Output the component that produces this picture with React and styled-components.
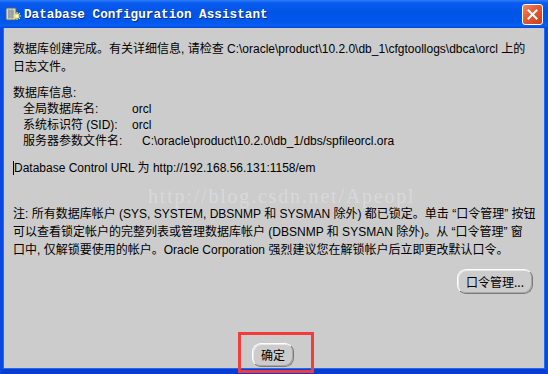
import React from 'react';
import styled, { createGlobalStyle } from 'styled-components';

const GlobalStyle = createGlobalStyle`
  html, body {
    margin: 0;
    padding: 0;
    background: #cccccc;
  }
`;

const latin = `"Liberation Sans", "Noto Sans CJK SC", sans-serif`;
const cjk = `"Noto Sans CJK SC", sans-serif`;

const Window = styled.div`
  position: relative;
  width: 548px;
  height: 374px;
  display: flex;
  flex-direction: column;
  overflow: hidden;
  font-family: ${latin};
  font-size: 12px;
  color: #000;
`;

const TitleBar = styled.div`
  height: 28px;
  flex: none;
  display: flex;
  align-items: center;
  padding: 0 5px 0 5px;
  box-sizing: border-box;
  background: linear-gradient(
    to bottom,
    #2e7ff5 0%,
    #0a5cf0 10%,
    #0054e6 40%,
    #0058ec 80%,
    #0a5ff2 92%,
    #0046d8 100%
  );
`;

const AppIcon = styled.svg`
  width: 16px;
  height: 16px;
  flex: none;
  margin-right: 3px;
`;

const Title = styled.div`
  flex: 1;
  font-family: "Liberation Mono", "DejaVu Sans Mono", monospace;
  font-weight: bold;
  font-size: 12.7px;
  color: #fff;
  text-shadow: 1px 1px 0 #0b2a8c;
  white-space: nowrap;
`;

const CloseButton = styled.div`
  width: 21px;
  height: 21px;
  box-sizing: border-box;
  border: 1px solid #fff;
  border-radius: 3px;
  background: linear-gradient(135deg, #ef8a63 0%, #e15a31 45%, #c8401c 100%);
  display: flex;
  align-items: center;
  justify-content: center;
  margin-top: 1px;
`;

const Body = styled.div`
  flex: 1;
  display: flex;
  flex-direction: column;
  background: #cccccc;
  border-left: 3px solid #0a48e2;
  border-right: 3px solid #0a48e2;
  border-bottom: 5px solid #0a3ccf;
  box-shadow: inset 1px 0 0 #1a6cf6, inset -1px 0 0 #1a6cf6, inset 0 -1px 0 #1a6cf6;
  padding: 12px 12px 2px 10px;
`;

const Paragraph = styled.div`
  line-height: 18px;
  white-space: nowrap;
  margin-top: ${p => p.$top || 0}px;
`;

const InfoBlock = styled.div`
  margin-top: 9px;
  line-height: 16px;
  white-space: nowrap;
`;

const InfoRow = styled.div`
  display: flex;
  padding-left: 10px;
`;

const InfoLabel = styled.span`
  width: ${p => (p.$wide ? 119 : 109)}px;
  flex: none;
`;

const Caret = styled.span`
  display: inline-block;
  width: 1px;
  height: 14px;
  background: #000;
  vertical-align: -3px;
`;

const ButtonRow = styled.div`
  display: flex;
  justify-content: ${p => p.$align || 'flex-end'};
  margin-top: ${p => p.$top || 0}px;
`;

const PillButton = styled.button`
  height: ${p => p.$h || 25}px;
  padding: 0 ${p => p.$pad || 8}px;
  box-sizing: border-box;
  background: #cccccc;
  border: 1px solid;
  border-color: #ffffff #7a7a7a #7a7a7a #ffffff;
  border-radius: 9px;
  box-shadow: inset 1px 1px 0 #e8e8e8, inset -1px -1px 0 #a8a8a8;
  font-family: ${cjk};
  font-size: 12px;
  color: #000;
  line-height: 1;
  cursor: default;
`;

const Spacer = styled.div`
  flex: 1;
`;

const Watermark = styled.div`
  position: absolute;
  left: 148px;
  top: 185px;
  font-family: "Liberation Serif", "DejaVu Serif", serif;
  font-size: 20px;
  letter-spacing: 1.8px;
  color: #d9d9d9;
  pointer-events: none;
  white-space: nowrap;
`;

const Highlight = styled.div`
  position: absolute;
  left: 238px;
  top: 332px;
  width: 76px;
  height: 41px;
  box-sizing: border-box;
  border: 3px solid #f23b3b;
  pointer-events: none;
`;

const DbIcon = () => (
  <AppIcon viewBox="0 0 16 16">
    <rect x="1" y="2" width="10" height="12" rx="1" fill="#d8d8d0" stroke="#55606a" strokeWidth="1" />
    <path d="M3 5h6M3 7h6M3 9h6M3 11h6" stroke="#6c7a86" strokeWidth="1" />
    <path d="M4 3v10M7 3v10" stroke="#8a98a4" strokeWidth="1" />
    <path d="M12 6v8M8 10h8M9.2 7.2l5.6 5.6M14.8 7.2l-5.6 5.6" stroke="#ffe84a" strokeWidth="1.2" />
    <circle cx="12" cy="10" r="1.5" fill="#ffffff" />
  </AppIcon>
);

const CloseIcon = () => (
  <svg width="11" height="11" viewBox="0 0 11 11">
    <path d="M1.5 1.5l8 8M9.5 1.5l-8 8" stroke="#fff" strokeWidth="2" strokeLinecap="square" />
  </svg>
);

const App = () => (
  <Window>
    <GlobalStyle />
    <TitleBar>
      <DbIcon />
      <Title>Database Configuration Assistant</Title>
      <CloseButton>
        <CloseIcon />
      </CloseButton>
    </TitleBar>
    <Body>
      <Paragraph>
        数据库创建完成。有关详细信息, 请检查 C:\oracle\product\10.2.0\db_1\cfgtoollogs\dbca\orcl 上的
        <br />
        日志文件。
      </Paragraph>
      <InfoBlock>
        <div>数据库信息:</div>
        <InfoRow>
          <InfoLabel>全局数据库名:</InfoLabel>
          <span>orcl</span>
        </InfoRow>
        <InfoRow>
          <InfoLabel>系统标识符 (SID):</InfoLabel>
          <span>orcl</span>
        </InfoRow>
        <InfoRow>
          <InfoLabel $wide>服务器参数文件名:</InfoLabel>
          <span>C:\oracle\product\10.2.0\db_1/dbs/spfileorcl.ora</span>
        </InfoRow>
      </InfoBlock>
      <Paragraph $top={10}>
        <Caret />Database Control URL 为 http://192.168.56.131:1158/em
      </Paragraph>
      <Paragraph $top={28}>
        注: 所有数据库帐户 (SYS, SYSTEM, DBSNMP 和 SYSMAN 除外) 都已锁定。单击 “口令管理” 按钮
        <br />
        可以查看锁定帐户的完整列表或管理数据库帐户 (DBSNMP 和 SYSMAN 除外)。从 “口令管理” 窗
        <br />
        口中, 仅解锁要使用的帐户。Oracle Corporation 强烈建议您在解锁帐户后立即更改默认口令。
      </Paragraph>
      <ButtonRow $top={10}>
        <PillButton $pad={8}>口令管理...</PillButton>
      </ButtonRow>
      <Spacer />
      <ButtonRow $align="center">
        <PillButton $h={24} $pad={8}>确定</PillButton>
      </ButtonRow>
    </Body>
    <Watermark>http://blog.csdn.net/Apeopl</Watermark>
    <Highlight />
  </Window>
);

export default App;
